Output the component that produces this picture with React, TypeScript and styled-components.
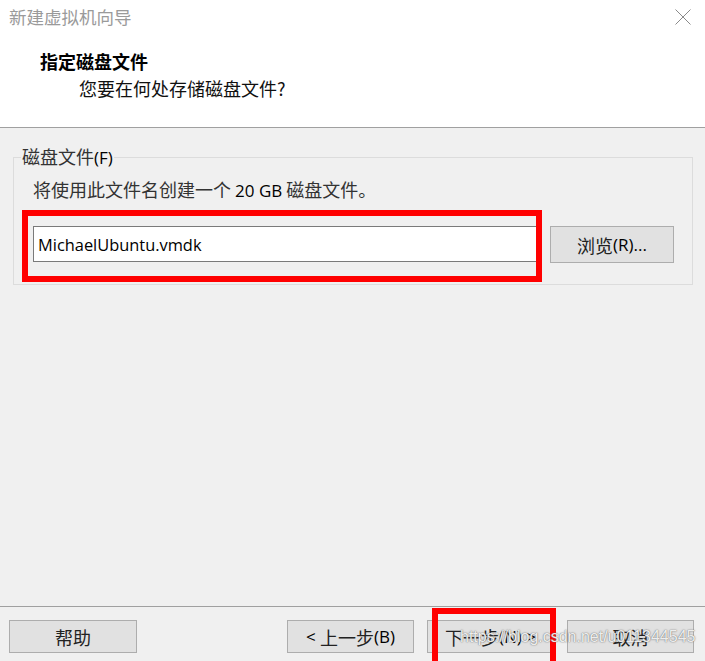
import React from "react";
import styled, { createGlobalStyle } from "styled-components";

const Global = createGlobalStyle`
  html, body { margin: 0; padding: 0; background: #f0f0f0; overflow: hidden; }
  * { box-sizing: border-box; }
`;

const FONT = `"Noto Sans CJK SC", "Noto Sans", sans-serif`;

const Window = styled.div`
  position: relative;
  width: 705px;
  height: 661px;
  display: flex;
  flex-direction: column;
  font-family: ${FONT};
  font-size: 18px;
  color: #1a1a1a;
  background: #f0f0f0;
  overflow: hidden;
`;

const TitleBar = styled.div`
  height: 33px;
  flex: none;
  display: flex;
  align-items: center;
  justify-content: space-between;
  padding: 0 14px 0 9px;
  background: #ffffff;
`;

const TitleText = styled.span`
  color: #9a9a9a;
  font-size: 17.5px;
  line-height: 22px;
`;

const Header = styled.div`
  height: 95px;
  flex: none;
  display: flex;
  flex-direction: column;
  background: #ffffff;
  border-bottom: 1px solid #a0a0a0;
  padding-top: 17px;
`;

const HeaderTitle = styled.div`
  padding-left: 40px;
  font-weight: 700;
  color: #000;
  line-height: 22px;
`;

const HeaderSub = styled.div`
  padding-left: 79px;
  margin-top: 5px;
  color: #111;
  line-height: 22px;
`;

const Content = styled.div`
  flex: 1;
  padding: 18px 12px 0 13px;
  background: #f0f0f0;
`;

const Group = styled.fieldset`
  margin: 0;
  padding: 0;
  border: 1px solid #dcdcdc;
  height: 139px;
`;

const GroupLabel = styled.legend`
  margin-left: 7px;
  padding: 0 1px;
  line-height: 20px;
  color: #333;
`;

const Desc = styled.div`
  margin-top: 10px;
  padding-left: 19px;
  line-height: 22px;
  color: #333;
`;

const Latin = styled.span`
  color: #000;
  font-family: "Open Sans", "Noto Sans", sans-serif;
  font-size: 17px;
`;

const FieldRow = styled.div`
  display: flex;
  align-items: flex-start;
  gap: 8px;
  margin-top: 8px;
  padding-left: 8px;
`;

const Highlight = styled.div`
  width: 520px;
  height: 72px;
  border: 6px solid #ff0000;
  padding: 10px 0 0 5px;
`;

const PathInput = styled.div`
  width: 100%;
  height: 36px;
  border: 1px solid #7a7a7a;
  border-right: none;
  background: #ffffff;
  padding-left: 4px;
  display: flex;
  align-items: center;
  font-family: "Open Sans", "Noto Sans", sans-serif;
  font-size: 16.4px;
  color: #000;
`;

const Button = styled.button<{ $w?: number }>`
  position: relative;
  width: ${(p) => p.$w ?? 127}px;
  height: 33px;
  padding: 0;
  border: 1px solid #adadad;
  background: #e1e1e1;
  font-family: ${FONT};
  font-size: 18px;
  color: #222;
  display: flex;
  align-items: center;
  justify-content: center;
  line-height: 22px;
`;

const BrowseButton = styled(Button)`
  height: 37px;
  margin-top: 16px;
`;

const Footer = styled.div`
  height: 55px;
  flex: none;
  display: flex;
  align-items: flex-start;
  gap: 13px;
  border-top: 1px solid #a0a0a0;
  padding: 13px 11px 0 9px;
`;

const Spacer = styled.div`
  flex: 1;
`;

const Mark = styled.span`
  position: absolute;
  left: 4px;
  top: -13px;
  width: 124px;
  height: 70px;
  border: 6px solid #ff0000;
  pointer-events: none;
`;

const Watermark = styled.span`
  position: absolute;
  left: 460px;
  top: 627px;
  line-height: 20px;
  font-family: "Liberation Sans", Arial, sans-serif;
  font-size: 16px;
  color: rgba(255, 255, 255, 0.9);
  text-shadow: 0 0 1px rgba(90, 90, 90, 0.9), 0 0 2px rgba(120, 120, 120, 0.6);
  pointer-events: none;
`;

const CloseIcon = () => (
  <svg width="16" height="16" viewBox="0 0 16 16">
    <path d="M0.5 0.5 L15.5 15.5 M15.5 0.5 L0.5 15.5" stroke="#8a8a8a" strokeWidth="1" fill="none" />
  </svg>
);

export default function App() {
  return (
    <Window>
      <Global />
      <TitleBar>
        <TitleText>新建虚拟机向导</TitleText>
        <CloseIcon />
      </TitleBar>
      <Header>
        <HeaderTitle>指定磁盘文件</HeaderTitle>
        <HeaderSub>您要在何处存储磁盘文件?</HeaderSub>
      </Header>
      <Content>
        <Group>
          <GroupLabel>
            磁盘文件<Latin>(F)</Latin>
          </GroupLabel>
          <Desc>
            将使用此文件名创建一个 <Latin>20 GB</Latin> 磁盘文件。
          </Desc>
          <FieldRow>
            <Highlight>
              <PathInput>MichaelUbuntu.vmdk</PathInput>
            </Highlight>
            <BrowseButton $w={124}>
              浏览<Latin>(R)...</Latin>
            </BrowseButton>
          </FieldRow>
        </Group>
      </Content>
      <Footer>
        <Button $w={128}>帮助</Button>
        <Spacer />
        <Button>
          <Latin>&lt;&nbsp;</Latin>上一步<Latin>(B)</Latin>
        </Button>
        <Button>
          下一步<Latin>(N)&nbsp;&gt;</Latin>
          <Mark />
        </Button>
        <Button>取消</Button>
      </Footer>
      <Watermark>https://blog.csdn.net/u011344545</Watermark>
    </Window>
  );
}
